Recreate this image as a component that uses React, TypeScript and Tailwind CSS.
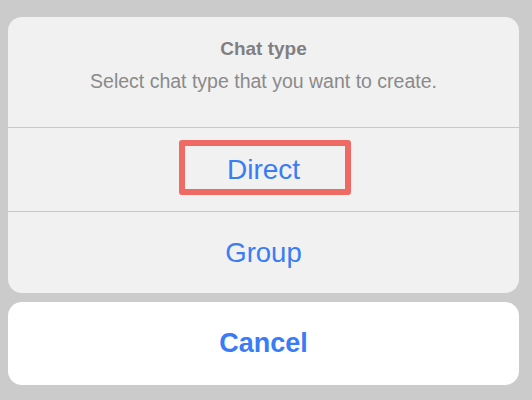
export default function App() {
  const font = { fontFamily: '"Liberation Sans", Arial, sans-serif' };
  return (
    <div
      className="w-[532px] h-[400px] bg-[#cbcbcb] pt-[17px] pl-2 overflow-hidden"
      style={font}
    >
      <div className="w-[511px] rounded-[14px] bg-[#f1f1f1] overflow-hidden">
        <div className="flex flex-col items-center pt-[20px] pb-[34px]">
          <p className="text-[19px] leading-[24px] font-bold text-[#808080]">Chat type</p>
          <p className="mt-[8px] text-[19.5px] leading-[24px] text-[#8a8a8a]">
            Select chat type that you want to create.
          </p>
        </div>
        <div className="h-px bg-[#c8c8c8]" />
        <div className="relative h-[83px] flex items-center justify-center">
          <span className="text-[28px] text-[#3a7cf5]">Direct</span>
          <div className="absolute left-[171px] top-[12px] w-[172px] h-[55px] border-[6px] border-[#ef6a64] rounded-[3px]" />
        </div>
        <div className="h-px bg-[#c8c8c8]" />
        <div className="h-[81px] flex items-center justify-center">
          <span className="text-[27.5px] text-[#3a7cf5]">Group</span>
        </div>
      </div>
      <div className="mt-[9px] w-[511px] h-[83px] rounded-[14px] bg-white flex items-center justify-center">
        <span className="text-[27px] font-bold text-[#3a7cf5]">Cancel</span>
      </div>
    </div>
  );
}
